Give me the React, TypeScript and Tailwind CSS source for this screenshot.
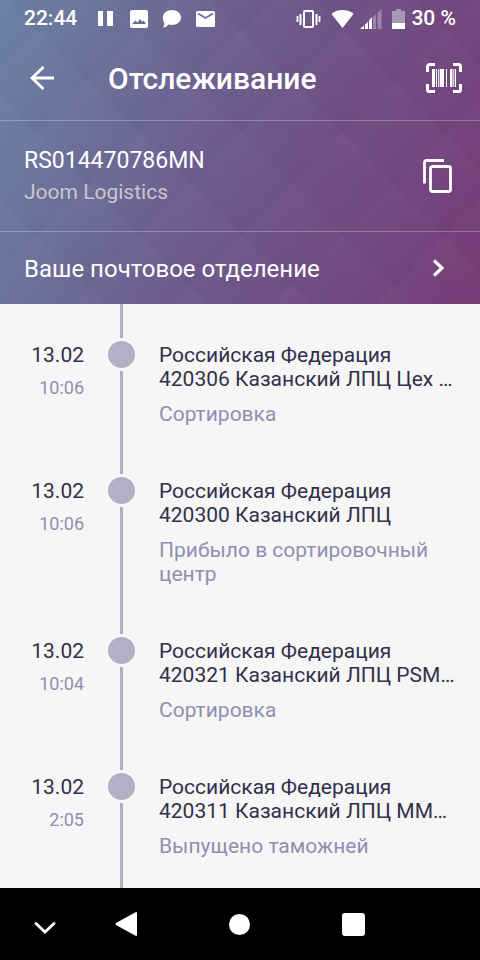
import type { ReactNode } from 'react';

interface TrackEvent {
  date: string;
  time: string;
  place: string[];
  status: string;
}

const events: TrackEvent[] = [
  {
    date: '13.02',
    time: '10:06',
    place: ['Российская Федерация', '420306 Казанский ЛПЦ Цех …'],
    status: 'Сортировка',
  },
  {
    date: '13.02',
    time: '10:06',
    place: ['Российская Федерация', '420300 Казанский ЛПЦ'],
    status: 'Прибыло в сортировочный центр',
  },
  {
    date: '13.02',
    time: '10:04',
    place: ['Российская Федерация', '420321 Казанский ЛПЦ PSM…'],
    status: 'Сортировка',
  },
  {
    date: '13.02',
    time: '2:05',
    place: ['Российская Федерация', '420311 Казанский ЛПЦ ММ…'],
    status: 'Выпущено таможней',
  },
];

function HeaderPattern() {
  return (
    <svg className="absolute inset-0 h-full w-full" aria-hidden="true">
      <defs>
        <linearGradient id="facet" x1="0" y1="0" x2="0" y2="1">
          <stop offset="0" stopColor="#fff" stopOpacity="0.035" />
          <stop offset="0.5" stopColor="#fff" stopOpacity="0.01" />
          <stop offset="1" stopColor="#000" stopOpacity="0.025" />
        </linearGradient>
        <pattern id="facets" x="37" y="82" width="102" height="102" patternUnits="userSpaceOnUse">
          <path d="M51 0l51 51-51 51L0 51z" fill="url(#facet)" />
          <path d="M0-51l51 51L0 51l-51-51z" fill="url(#facet)" />
          <path d="M102-51l51 51-51 51-51-51z" fill="url(#facet)" />
          <path d="M0 51l51 51-51 51-51-51z" fill="url(#facet)" />
          <path d="M102 51l51 51-51 51-51-51z" fill="url(#facet)" />
        </pattern>
      </defs>
      <rect width="100%" height="100%" fill="url(#facets)" />
    </svg>
  );
}

function StatusBar() {
  return (
    <div className="flex h-9 items-center justify-between px-6 pt-0.5 text-[21px] font-medium">
      <div className="flex items-center">
        <span>22:44</span>
        <svg className="ml-5 h-4 w-4" viewBox="0 0 16 16" fill="currentColor">
          <path d="M1 0h5v15H1zM10 0h6v15h-6z" />
        </svg>
        <svg className="ml-[17px] h-[18px] w-[18px]" viewBox="0 0 18 18" fill="currentColor">
          <path
            fillRule="evenodd"
            d="M2 0h14a2 2 0 0 1 2 2v14a2 2 0 0 1-2 2H2a2 2 0 0 1-2-2V2a2 2 0 0 1 2-2zM2 14h14l-2.500-3.500-1.500 1.300L10 9l-2.500 3.500L5.500 10.500z"
          />
        </svg>
        <svg className="ml-[14px] h-[18px] w-5" viewBox="0 0 20 18" fill="currentColor">
          <path d="M10 0c5 0 9 3.200 9 7.500S15 15 10 15c-1.200 0-2.300-.2-3.300-.5C5 16.500 3 17.500.8 17.500c1.200-1.300 1.700-2.900 1.400-4.800C1 11.300.8 9.500.8 7.500.8 3.500 5 0 10 0z" />
        </svg>
        <svg className="ml-[13px] h-4 w-5" viewBox="0 0 20 16">
          <rect x="1" width="19" height="16" rx="1.500" fill="currentColor" />
          <path d="M3 2.500l7.500 4.500L18 2.500" fill="none" stroke="#686b98" strokeWidth="1.600" />
        </svg>
      </div>
      <div className="flex items-center">
        <svg className="h-[18px] w-[25px]" viewBox="0 0 25 18" fill="none" stroke="currentColor">
          <rect x="8" y="1" width="9" height="16" rx="1" strokeWidth="2" />
          <path d="M4.500 4v11M20.500 4v11" strokeWidth="2" />
          <path d="M1.500 6v6M23.500 6v6" strokeWidth="1.800" />
        </svg>
        <svg className="ml-[10px] h-[18px] w-[23px]" viewBox="0 0 23 18" fill="currentColor">
          <path d="M11.500 18L.5 4C3 1.500 7 0 11.500 0S20 1.500 22.500 4z" />
        </svg>
        <svg className="ml-[6px] h-5 w-[22px]" viewBox="0 0 22 20" fill="currentColor">
          <path d="M0 20l4-3.500V20zM5 15.500l3-2.500v7H5zM9 11.500L12 8v12H9z" />
          <path d="M13 8l3-3v15h-3zM17.500 4L21.500 0v20h-4z" opacity="0.3" />
        </svg>
        <svg className="ml-[10px] h-5 w-[13px]" viewBox="0 0 13 20" fill="currentColor">
          <path d="M4 0h5v2h4v12H0V2h4z" opacity="0.4" />
          <path d="M0 14h13v6H0z" />
        </svg>
        <span className="ml-[6px]">30 %</span>
      </div>
    </div>
  );
}

function IconButton({ label, children }: { label: string; children: ReactNode }) {
  return (
    <button type="button" aria-label={label} className="flex shrink-0 items-center justify-center">
      {children}
    </button>
  );
}

function Header() {
  return (
    <header className="relative bg-linear-[108deg,#6a80a3,#6b5b8c_45%,#753a75] text-white">
      <HeaderPattern />
      <div className="relative">
        <StatusBar />
        <div className="flex h-[85px] items-center border-b border-white/25 pr-[18px] pl-[30px]">
          <IconButton label="Назад">
            <svg className="h-6 w-6" viewBox="0 0 24 24" fill="none" stroke="currentColor" strokeWidth="2.800">
              <path d="M24 12H2M13.500 1L2 12l11.500 11" />
            </svg>
          </IconButton>
          <h1 className="ml-[54px] flex-1 pt-0.5 text-[30px] leading-9 font-medium">Отслеживание</h1>
          <IconButton label="Сканировать">
            <svg className="h-[30px] w-9" viewBox="0 0 36 30">
              <path
                d="M9 1.500H3.500a2 2 0 0 0-2 2V9M27 1.500h5.500a2 2 0 0 1 2 2V9M9 28.500H3.500a2 2 0 0 1-2-2V21M27 28.500h5.500a2 2 0 0 0 2-2V21"
                fill="none"
                stroke="currentColor"
                strokeWidth="3"
              />
              <path
                d="M6 6h3v18H6zM10 6h1v18h-1zM12 6h.8v18H12zM13.700 6h4.300v18h-4.300zM20 6h1v18h-1zM24 6h2.500v18H24zM27.300 6h1v18h-1zM29 6h1v18h-1z"
                fill="currentColor"
              />
            </svg>
          </IconButton>
        </div>
        <div className="flex h-[111px] items-center justify-between border-b border-white/25 pr-[26px] pl-6">
          <div>
            <p className="text-[23px] leading-8">RS014470786MN</p>
            <p className="text-[21px] leading-[30px] text-[#c9c7ca]">Joom Logistics</p>
          </div>
          <IconButton label="Копировать">
            <svg className="h-9 w-8" viewBox="0 0 32 36" fill="none" stroke="currentColor" strokeWidth="2.800">
              <path d="M2.500 25.500V4.500a2 2 0 0 1 2-2H22" />
              <rect x="8.500" y="8.500" width="20" height="25" rx="2" />
            </svg>
          </IconButton>
        </div>
        <button
          type="button"
          className="flex h-[72px] w-full items-center justify-between pr-9 pl-6 text-left text-2xl"
        >
          <span className="pt-0.5">Ваше почтовое отделение</span>
          <svg className="h-[18px] w-3" viewBox="0 0 12 18" fill="none" stroke="currentColor" strokeWidth="3.200">
            <path d="M2 1.500L10 9l-8 7.500" />
          </svg>
        </button>
      </div>
    </header>
  );
}

function EventRow({ event }: { event: TrackEvent }) {
  return (
    <li className="flex last:flex-1">
      <div className="w-[84px] shrink-0 pt-[39px] text-right">
        <p className="text-[21px] leading-6 text-[#30304a]">{event.date}</p>
        <p className="mt-[9px] text-lg leading-6 text-[#8f8fb0]">{event.time}</p>
      </div>
      {/* line, dot, line */}
      <div className="ml-6 flex w-[27px] shrink-0 flex-col items-center gap-[3px]">
        <span className="h-[34px] w-[3px] bg-[#b2b0c5]" />
        <span className="h-[27px] w-[27px] rounded-full bg-[#b2b0c5]" />
        <span className="w-[3px] flex-1 bg-[#b2b0c5]" />
      </div>
      <div className="ml-6 min-w-0 flex-1 pt-[39px] pr-6 pb-[14px] text-[21px] leading-6">
        {event.place.map((line) => (
          <p key={line} className="whitespace-nowrap text-[#30304a]">
            {line}
          </p>
        ))}
        <p className="mt-[11px] text-[#8f8fb0]">{event.status}</p>
      </div>
    </li>
  );
}

function SystemNav() {
  return (
    <nav className="grid h-[72px] grid-cols-[1fr_auto_1fr] items-center bg-black text-white">
      <div className="pl-[34px]">
        <IconButton label="Скрыть">
          <svg className="mt-2 h-3 w-[22px]" viewBox="0 0 22 12" fill="none" stroke="currentColor" strokeWidth="2.800">
            <path d="M2 1.500l9 8.500 9-8.500" strokeLinecap="round" />
          </svg>
        </IconButton>
      </div>
      <div className="flex items-center gap-[92px]">
        <IconButton label="Назад">
          <svg className="h-6 w-[22px]" viewBox="0 0 22 24" fill="currentColor">
            <path d="M21 0q1 0 1 1v22q0 1-1 1L1 13q-1-1 0-2z" />
          </svg>
        </IconButton>
        <IconButton label="Домой">
          <span className="h-[21px] w-[21px] rounded-full bg-white" />
        </IconButton>
        <IconButton label="Недавние">
          <span className="h-[23px] w-[23px] rounded-[3px] bg-white" />
        </IconButton>
      </div>
    </nav>
  );
}

export default function App() {
  return (
    <div className="flex min-h-screen flex-col bg-[#f7f6f7] font-['Roboto',sans-serif]">
      <Header />
      <ul className="flex flex-1 flex-col">
        {events.map((event, i) => (
          <EventRow key={i} event={event} />
        ))}
      </ul>
      <SystemNav />
    </div>
  );
}
